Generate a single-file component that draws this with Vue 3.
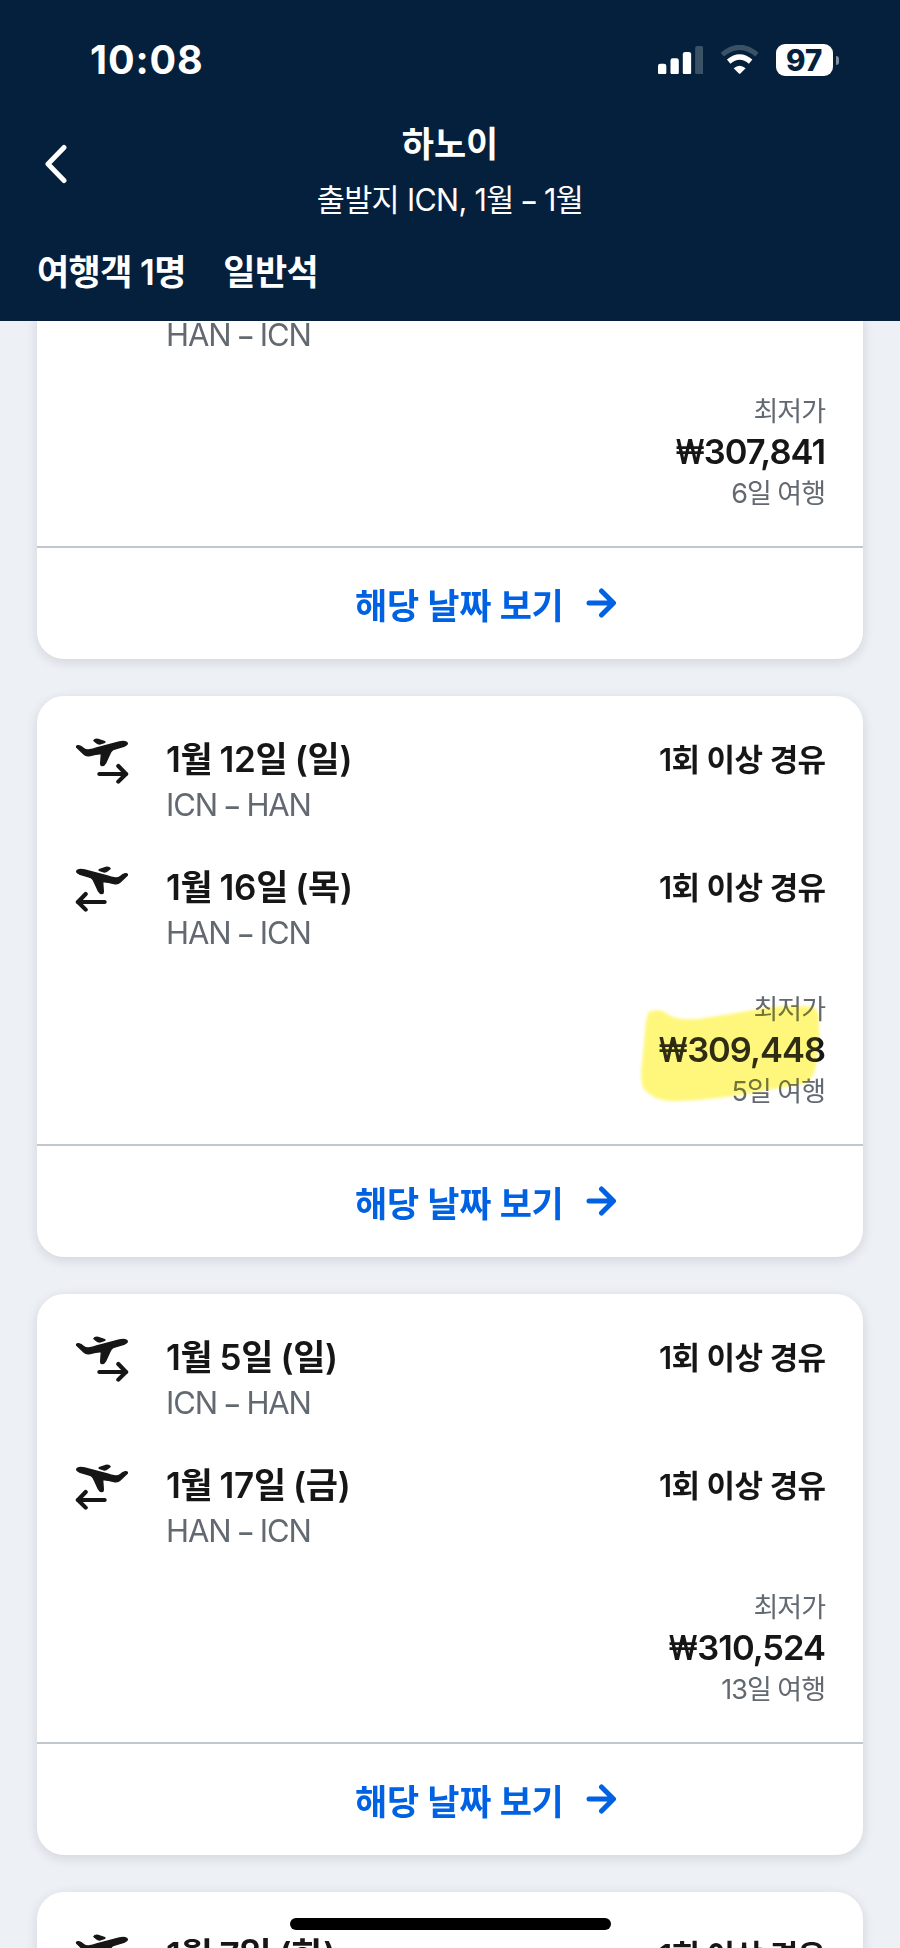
<script setup>
const cards = [
  {
    cut: true,
    legs: [{ back: true, route: ['HAN', 'ICN'] }],
    price: '307,841',
    days: '6일 여행'
  },
  {
    legs: [
      { date: '1월 12일 (일)', route: ['ICN', 'HAN'], stops: '1회 이상 경유' },
      { back: true, date: '1월 16일 (목)', route: ['HAN', 'ICN'], stops: '1회 이상 경유' }
    ],
    price: '309,448',
    days: '5일 여행',
    marked: true
  },
  {
    legs: [
      { date: '1월 5일 (일)', route: ['ICN', 'HAN'], stops: '1회 이상 경유' },
      { back: true, date: '1월 17일 (금)', route: ['HAN', 'ICN'], stops: '1회 이상 경유' }
    ],
    price: '310,524',
    days: '13일 여행'
  },
  { legs: [{ date: '1월 7일 (화)', stops: '1회 이상 경유' }] }
]
</script>

<template>
  <div class="screen">
    <header class="header">
      <div class="status">
        <span class="clock">10:08</span>
        <div class="indicators">
          <svg class="signal" viewBox="0 0 136 86">
            <rect x="0" y="53" width="25" height="33" rx="7" />
            <rect x="37.500" y="37" width="25" height="49" rx="7" />
            <rect x="74.500" y="18" width="25" height="68" rx="7" />
            <rect x="111.500" y="0" width="25" height="86" rx="7" opacity=".22" />
          </svg>
          <svg class="wifi" viewBox="0 0 118 88">
            <path d="M7 29Q59 -15 111 29" fill="none" stroke="#fff" stroke-width="15" opacity=".22" />
            <path d="M26 50Q59 22 92 50" fill="none" stroke="#fff" stroke-width="16" />
            <path d="M41 70Q59 54 77 70L62 85Q59 88 56 85Z" />
          </svg>
          <div class="battery"><span class="level">97</span><i class="nub"></i></div>
        </div>
      </div>
      <div class="nav">
        <svg class="back" viewBox="0 0 24 40">
          <path d="M20 3.500L4 20L20 36.500" />
        </svg>
        <div class="titles">
          <h1>하노이</h1>
          <p>출발지 ICN, 1월 <span class="dash">–</span> 1월</p>
        </div>
      </div>
      <div class="filters">
        <span class="pax">여행객 1명</span>
        <span class="cabin">일반석</span>
      </div>
    </header>

    <main class="list">
      <article v-for="(card, i) in cards" :key="i" class="card" :class="{ cut: card.cut }">
        <div v-for="(leg, j) in card.legs" :key="j" class="leg">
          <div class="icon-col">
            <svg v-if="leg.date" class="plane" :class="{ flip: leg.back }" viewBox="225 170 162 142">
              <path class="body" d="M230 201Q228 195 236 196Q244 198 250 204Q257 210 266 209Q278 207 290 203L358 185Q372 181 380 186Q386 192 374 197L339 208Q332 212 329 222L317 248Q313 256 306 256Q302 256 302 250L304 220Q286 221 270 226Q259 229 252 222Z" />
              <path d="M279 181Q283 173 295 175L315 182Q320 186 313 189L299 193Q292 193 288 189Z" />
              <path class="line" d="M298 281H379M355 257L378 281L355 304" />
            </svg>
          </div>
          <div class="info">
            <div v-if="leg.date" class="date">{{ leg.date }}</div>
            <div v-if="leg.route" class="route">{{ leg.route[0] }} <span class="dash">–</span> {{ leg.route[1] }}</div>
          </div>
          <div v-if="leg.stops" class="stops">{{ leg.stops }}</div>
        </div>
        <template v-if="card.price">
          <div class="fare">
            <div class="small label">최저가</div>
            <div class="price"><span class="won">₩</span>{{ card.price }}</div>
            <div class="small days">{{ card.days }}</div>
            <template v-if="card.marked">
              <svg v-for="layer in ['ink', 'haze']" :key="layer" class="marker" :class="layer" viewBox="110 905 560 310">
                <path d="M145 935Q175 922 200 940Q225 962 300 955Q400 940 480 925Q570 912 640 920Q658 935 655 960Q660 1020 648 1090Q640 1140 610 1150Q520 1165 430 1182Q300 1203 210 1202Q160 1200 130 1165Q118 1140 125 1090Q132 1020 137 960Z" />
              </svg>
            </template>
          </div>
          <div class="action">
            <span class="action-text">해당 날짜 보기</span>
            <svg class="arrow" viewBox="0 0 30 30">
              <path d="M3 15H27M15.500 3L27.500 15L15.500 27" />
            </svg>
          </div>
        </template>
      </article>
    </main>
    <div class="home"></div>
  </div>
</template>

<style>
body {
  background: #edf0f5;
}
</style>

<style scoped>
.screen {
  position: relative;
  width: 900px;
  height: 1948px;
  overflow: hidden;
  background: #edf0f5;
  font-family: Inter, "Noto Sans CJK KR", sans-serif;
  color: #161616;
  white-space: nowrap;
}
.header {
  position: relative;
  z-index: 1;
  box-sizing: border-box;
  height: 321px;
  background: #05203c;
  color: #fff;
}
.status {
  display: flex;
  justify-content: space-between;
  height: 120px;
  padding: 0 61px 0 90px;
}
.clock {
  margin-top: 36px;
  font-size: 39.500px;
  font-weight: 750;
  line-height: 48px;
  letter-spacing: 0.900px;
}
.indicators {
  display: flex;
  height: 120px;
  align-items: center;
}
.indicators svg {
  fill: #fff;
}
.signal {
  width: 45.300px;
  height: 28.700px;
  margin-right: 16.700px;
}
.wifi {
  width: 39.300px;
  height: 29.300px;
  margin-right: 16.700px;
}
.battery {
  position: relative;
  width: 57.500px;
  height: 32.300px;
  margin-right: 6px;
  border-radius: 9px;
  background: #fff;
  color: #05203c;
  text-align: center;
}
.level {
  font-size: 29.500px;
  font-weight: 800;
  line-height: 33px;
}
.nub {
  position: absolute;
  right: -6px;
  top: 12px;
  width: 3.300px;
  height: 9px;
  border-radius: 0 5px 5px 0;
  background: #8290a0;
}
.nav {
  display: grid;
  grid-template-columns: 100px 1fr 100px;
  height: 104px;
}
.back {
  width: 24px;
  height: 40px;
  margin: 23.500px 0 0 43.500px;
}
.back path,
.arrow path {
  fill: none;
  stroke: #fff;
  stroke-width: 5;
  stroke-linecap: round;
  stroke-linejoin: round;
}
.titles {
  text-align: center;
}
h1 {
  margin: 0;
  font-size: 35px;
  font-weight: 600;
  line-height: 48px;
}
.titles p {
  margin: 0;
  padding-top: 8px;
  font-size: 30.500px;
  font-weight: 370;
  line-height: 48px;
  letter-spacing: -0.650px;
}
.dash {
  font-family: "Noto Sans", sans-serif;
  font-weight: 500;
  line-height: 0;
}
.filters {
  display: flex;
  gap: 37.500px;
  padding-left: 37px;
  font-size: 35px;
  font-weight: 600;
  line-height: 96px;
  letter-spacing: -0.600px;
}
.list {
  display: flex;
  flex-direction: column;
  gap: 37px;
  padding: 0 37px;
  margin-top: -5px;
}
.card {
  box-sizing: border-box;
  padding-top: 37px;
  border-radius: 27px;
  background: #fff;
  box-shadow: 0 3px 12px rgba(22, 32, 46, 0.13);
  min-height: 120px;
}
.card.cut {
  padding-top: 0;
  border-radius: 0 0 27px 27px;
}
.leg {
  display: flex;
  padding: 0 37.500px 0 38px;
}
.leg + .leg {
  margin-top: 37px;
}
.icon-col {
  width: 91px;
}
.plane {
  display: block;
  width: 54px;
  height: 47.300px;
  margin-top: 3.700px;
  fill: #161616;
}
.plane.flip {
  transform: scaleX(-1);
}
.plane .body {
  stroke: #161616;
  stroke-width: 4;
  stroke-linejoin: round;
}
.plane .line {
  fill: none;
  stroke: #161616;
  stroke-width: 12.500;
  stroke-linecap: round;
  stroke-linejoin: round;
}
.info {
  flex: 1;
}
.date {
  font-size: 35px;
  font-weight: 600;
  line-height: 53px;
  letter-spacing: -0.300px;
  word-spacing: -1.300px;
}
.route {
  font-size: 31px;
  line-height: 38px;
  font-weight: 370;
  letter-spacing: -1.150px;
  color: #626971;
}
.stops {
  font-size: 31px;
  font-weight: 600;
  line-height: 53px;
  letter-spacing: -0.600px;
}
.fare {
  position: relative;
  padding: 38px 38px 34px;
  text-align: right;
}
.small {
  font-size: 27px;
  font-weight: 370;
  letter-spacing: -1px;
  color: #626971;
}
.label {
  line-height: 39px;
}
.price {
  margin-top: -2px;
  font-size: 34.500px;
  font-weight: 640;
  line-height: 46px;
  letter-spacing: -1px;
}
.won {
  display: inline-block;
  transform: scaleX(0.84);
  transform-origin: right;
}
.days {
  padding-top: 1px;
  line-height: 36px;
}
.marker {
  position: absolute;
  top: 12.700px;
  right: 39.700px;
  width: 186.700px;
  height: 103.300px;
  margin-top: 37px;
  overflow: visible;
  filter: blur(1.500px);
}
.marker.ink {
  fill: #fff87f;
  mix-blend-mode: multiply;
}
.marker.haze {
  fill: #fff060;
  opacity: 0.1;
}
.action {
  display: flex;
  align-items: center;
  box-sizing: border-box;
  height: 113px;
  padding-left: 318px;
  border-top: 2px solid #c1c7cf;
  color: #0062e3;
}
.action-text {
  padding-top: 4px;
  font-size: 35px;
  font-weight: 600;
  line-height: 48px;
  letter-spacing: -0.300px;
}
.arrow {
  width: 30px;
  height: 30px;
  margin-left: 22.500px;
  margin-top: -1px;
}
.arrow path {
  stroke: #0062e3;
}
.home {
  position: absolute;
  left: 290px;
  top: 1918px;
  width: 321px;
  height: 11.500px;
  border-radius: 6px;
  background: #000;
}
</style>
